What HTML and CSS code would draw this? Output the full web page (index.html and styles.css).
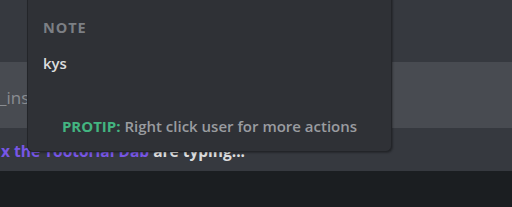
FILE: index.html
```html
<!DOCTYPE html>
<html lang="en">
<head>
    <meta charset="UTF-8" />
    <title>Chat</title>
    <link rel="stylesheet" href="styles.css">
</head>
<body>
    <div class="chat">
        <div class="messages"></div>
        <div class="input-bar">
            <span class="placeholder">_inspiration</span>
        </div>
        <div class="typing">
            <span class="names">x the Tootorial Dab</span> are typing...
        </div>
        <div class="footer"></div>

        <div class="popout">
            <div class="section">
                <div class="label">Note</div>
                <div class="note">kys</div>
            </div>
            <div class="protip">
                <strong>PROTIP:</strong> Right click user for more actions
            </div>
        </div>
    </div>
</body>
</html>
```

FILE: styles.css
```css
body {
    margin: 0;
    background: #1b1e21;
    font-family: 'Open Sans', 'Noto Sans', sans-serif;
    overflow: hidden;
}

.chat {
    position: relative;
    height: 207px;
    display: flex;
    flex-direction: column;
}

.messages {
    height: 62px;
    background: #36393f;
}

.input-bar {
    height: 66px;
    background: #484b51;
    display: flex;
    align-items: center;
}

.placeholder {
    font-size: 17px;
    color: #8a8d92;
    margin-left: -1px;
    padding-top: 4px;
}

.typing {
    height: 43px;
    background: #36393f;
    box-sizing: border-box;
    padding: 12px 0 0 1px;
    font-size: 15.5px;
    font-weight: 700;
    color: #dcddde;
}

.names {
    color: #7856e6;
}

.footer {
    flex: 1;
    background: #1b1e21;
}

.popout {
    position: absolute;
    left: 27px;
    top: -20px;
    width: 365px;
    height: 172px;
    box-sizing: border-box;
    background: #2f3136;
    border: 1px solid #232529;
    border-top: none;
    border-radius: 0 0 6px 6px;
    box-shadow: 1px 1px 2px rgba(0, 0, 0, 0.3);
    display: flex;
    flex-direction: column;
}

.section {
    padding: 38px 15px 0;
}

.label {
    font-size: 14.5px;
    line-height: 20px;
    font-weight: 700;
    text-transform: uppercase;
    letter-spacing: 0.9px;
    color: #7c7f84;
}

.note {
    margin-top: 15px;
    font-size: 15px;
    font-weight: 600;
    color: #dcddde;
}

.protip {
    margin-top: auto;
    padding-bottom: 15px;
    text-align: center;
    font-size: 15px;
    font-weight: 600;
    color: #9a9ca0;
}

.protip strong {
    color: #43b581;
    font-weight: 700;
}
```
